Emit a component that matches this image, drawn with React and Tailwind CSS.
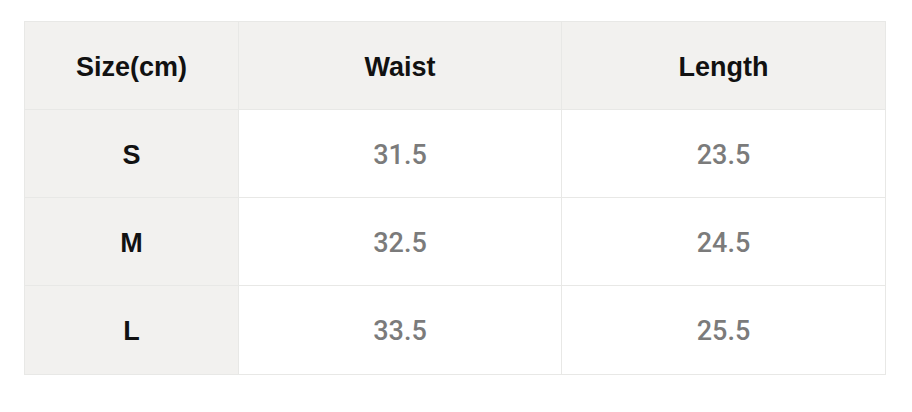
import React from 'react';

const rows = [
  ['S', '31.5', '23.5'],
  ['M', '32.5', '24.5'],
  ['L', '33.5', '25.5'],
];

const head = 'h-[88px] pt-[3px] bg-[#f2f1ef] flex items-center justify-center text-[27px] font-bold text-[#111] border-[#e8e8e6]';
const val = 'h-[88px] pt-[3px] bg-white flex items-center justify-center text-[27px] font-medium text-[#7b7b7b] border-[#e8e8e6]';

const App = () => {
  return (
    <div className="w-[912px] h-[412px] bg-white pt-[21px] pl-[24px]" style={{ fontFamily: '"Liberation Sans", Arial, sans-serif' }}>
      <div className="w-[862px] grid grid-cols-[214px_323px_323px] border border-[#e8e8e6]">
        <div className={`${head} border-r border-b`}>Size(cm)</div>
        <div className={`${head} border-r border-b`}>Waist</div>
        <div className={`${head} border-b`}>Length</div>
        {rows.map((r, idx) => {
          const last = idx === rows.length - 1;
          return (
            <React.Fragment key={idx}>
              <div className={`${head} border-r ${last ? '' : 'border-b'}`}>{r[0]}</div>
              <div className={`${val} border-r ${last ? '' : 'border-b'}`} style={{ fontFamily: 'Roboto, "Liberation Sans", sans-serif' }}>{r[1]}</div>
              <div className={`${val} ${last ? '' : 'border-b'}`} style={{ fontFamily: 'Roboto, "Liberation Sans", sans-serif' }}>{r[2]}</div>
            </React.Fragment>
          );
        })}
      </div>
    </div>
  );
};

export default App;
